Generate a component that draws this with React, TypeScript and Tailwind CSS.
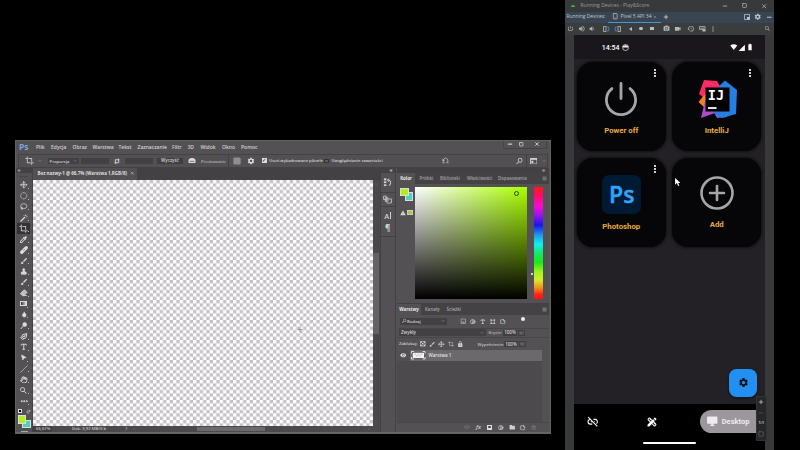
import React from "react";
import {
  MdLinkOff, MdDesktopWindows, MdSettings, MdMoreVert, MdPowerSettingsNew, MdVolumeUp, MdVolumeDown,
  MdPhotoCamera, MdVideocam, MdSignalCellular4Bar, MdBatteryFull, MdCrop, MdColorize,
  MdBrush, MdOutlineImage, MdLock, MdSearch, MdVisibility, MdFolder, MdFormatShapes,
  MdHistory, MdGridOn, MdHealing, MdWarning, MdDesignServices,
} from "react-icons/md";
import {
  Move, CircleDashed, Lasso, Wand, Eraser, Stamp, Droplet, PenTool, Type, MousePointer2, Hand, Ellipsis,
  ChevronDown, ChevronLeft, ChevronRight, ChevronUp, Menu, Link2, Contrast, Trash2, StickyNote, Undo2,
  Minus, Square, X, Plus, PanelTop, Slash, Smartphone, MonitorCog, PictureInPicture2,
} from "lucide-react";

type P = { c?: string; children?: React.ReactNode };

/** Fixed-width slot that centres an icon or label in a bar. */
const Cell = ({ c = "", children }: P) => (
  <div className={"flex h-full shrink-0 items-center justify-center " + c}>{children}</div>
);
/** Fixed-width slot with its label on the left. */
const Label = ({ c = "", children }: P) => (
  <span className={"block shrink-0 whitespace-nowrap " + c}>{children}</span>
);

const CropGlyph = ({ c }: { c: string }) => <MdCrop className={c} />;

function GradientTool() {
  return <div className="h-[5px] w-[7px] border-[0.5px] border-[#ddd] bg-linear-to-r from-[#333] to-[#ddd]" />;
}
function DodgeTool() {
  return (
    <svg viewBox="0 0 24 24" className="size-[7.5px]">
      <circle cx="15" cy="8" r="7" fill="#ddd" />
      <path d="M10 13L2 23" stroke="#ddd" strokeWidth="3" />
    </svg>
  );
}

const i = "size-[7.5px] text-[#dcdcdc]";
const tools: React.ReactNode[] = [
  <Move className={i} strokeWidth={2.6} />,
  <CircleDashed className={i} strokeWidth={2.2} />,
  <Lasso className={i} strokeWidth={2.2} />,
  <svg viewBox="0 0 16 16" className="size-[8px]" fill="none" stroke="#dcdcdc">
    <path d="M1 15L10 6" strokeWidth="2.6" />
    <path d="M11 1V4M15 5H12.500M14.500 1.500L13 3M7 2L8.500 3.500M14 9L12.500 7.500" strokeWidth="1.4" />
  </svg>,
  <CropGlyph c="size-[9px] text-[#e6e6e6]" />,
  <MdColorize className="size-[9px] text-[#dcdcdc]" />,
  <svg viewBox="0 0 16 16" className="size-[8px]">
    <path d="M3.500 12.500L12.500 3.500" stroke="#dcdcdc" strokeWidth="6.500" strokeLinecap="round" />
    <path d="M6 7.500L8.500 10M7.500 6L10 8.500" stroke="#5a585a" strokeWidth="1" />
  </svg>,
  <MdBrush className="size-[8px] text-[#dcdcdc]" />,
  <Stamp className={i} strokeWidth={3} fill="currentColor" />,
  <MdBrush className="size-[8px] text-[#dcdcdc]" />,
  <Eraser className={i} strokeWidth={2.5} fill="#bbb" />,
  <GradientTool />,
  <Droplet className="size-[6.5px] text-[#dcdcdc]" fill="currentColor" />,
  <DodgeTool />,
  <PenTool className={i + " -scale-x-100"} strokeWidth={3} />,
  <Type className={i} strokeWidth={3} />,
  <MousePointer2 className="size-[7px] rotate-[8deg] text-[#dcdcdc]" fill="currentColor" />,
  <Slash className="size-[8px] text-[#cfcfcf]" strokeWidth={2} />,
  <Hand className={i} strokeWidth={3} />,
  <MdSearch className="size-[9px] text-[#dcdcdc]" />,
  <Ellipsis className="size-[8.5px] text-[#dcdcdc]" strokeWidth={3.5} />,
];

function MenuBar() {
  return (
    <div className="flex h-[13.5px] items-center pl-[3.5px] text-[5px] font-semibold text-[#d2d2d2]">
      <Label c="w-[17px] text-[8.5px] font-bold text-[#7da7d6]">Ps</Label>
      <Label c="w-[15px]">Plik</Label>
      <Label c="w-[21.5px]">Edycja</Label>
      <Label c="w-[20px]">Obraz</Label>
      <Label c="w-[26px]">Warstwa</Label>
      <Label c="w-[19px]">Tekst</Label>
      <Label c="w-[34.5px]">Zaznaczanie</Label>
      <Label c="w-[15.5px]">Filtr</Label>
      <Label c="w-[13px]">3D</Label>
      <Label c="w-[21.5px]">Widok</Label>
      <Label c="w-[19px]">Okno</Label>
      <Label>Pomoc</Label>
      <div className="mr-[3px] mb-[5px] ml-auto flex h-[8px] items-center border-x-[0.5px] border-b-[0.5px] border-[#444244] text-[#ccc]">
        <Cell c="w-[11.5px]"><Minus className="size-[6px]" strokeWidth={5} /></Cell>
        <Cell c="w-[11.5px]"><Square className="size-[4.5px]" strokeWidth={4.5} /></Cell>
        <Cell c="w-[19px]"><X className="size-[6px]" strokeWidth={3.5} /></Cell>
      </div>
    </div>
  );
}

function OptionsBar() {
  return (
    <div className="mx-[2px] flex h-[13.5px] items-center border-[0.5px] border-[#444244] bg-[#525052] text-[4.5px] text-[#d2d2d2]">
      <Cell c="w-[22px]"><CropGlyph c="size-[9px] text-[#ddd]" /></Cell>
      <Cell c="-ml-[4px] w-[7px]"><ChevronDown className="size-[4px]" /></Cell>
      <div className="ml-[4px] flex h-[6.5px] w-[31px] items-center justify-between bg-[#424042] px-[2px] text-[4.3px] font-semibold">
        Proporcja <ChevronDown className="size-[4px]" />
      </div>
      <div className="ml-[2px] h-[6px] w-[28px] bg-[#424042]" />
      <Cell c="w-[16px]">
        <svg viewBox="0 0 14 14" className="size-[6px]" fill="none" stroke="#ddd" strokeWidth="2">
          <path d="M3 9V4H12M9 1L12 4 9 7M11 6V11H2M5 8L2 11 5 14" />
        </svg>
      </Cell>
      <div className="h-[6px] w-[28px] bg-[#424042]" />
      <div className="ml-[4.5px] flex h-[6.5px] w-[26px] items-center justify-center bg-[#403e40] font-semibold">Wyczyść</div>
      <Cell c="w-[18px]">
        <svg viewBox="0 0 16 12" className="h-[6px] w-[8px]"><path d="M1 5a7 5 0 0114 0v5H1z" fill="#ddd" /><path d="M3 7h10M6 5v3M10 5v3" stroke="#555" /></svg>
      </Cell>
      <Label c="w-[27px] text-[4.3px]">Prostowanie</Label>
      <Cell c="w-[17px] border-l-[0.5px] border-[#444244]"><MdGridOn className="size-[8px] text-[#ccc]" /></Cell>
      <Cell c="w-[11px]"><MdSettings className="size-[8px] text-[#ddd]" /></Cell>
      <Cell c="ml-[4px] w-[8px]">
        <div className="flex size-[5px] items-center justify-center bg-[#ddd] text-[5px] leading-none font-bold text-[#333]">✓</div>
      </Cell>
      <Label c="ml-px w-[54px] text-[4.1px] font-semibold">Usuń wykadrowane piksele</Label>
      <Cell c="w-[7px]"><div className="size-[4.5px] border-[0.5px] border-[#333] bg-[#5f5d5f]" /></Cell>
      <Label c="w-[111px] pl-[1.5px] text-[4.1px] font-semibold">Uwzględnianie zawartości</Label>
      <Cell c="w-[8px]">
        <svg viewBox="0 0 16 16" className="size-[7px]" fill="none" stroke="#bbb" strokeWidth="1.8">
          <path d="M5 13A5.500 5.500 0 1111 13M1 13H6M10 13H15M2 4V8H6" />
        </svg>
      </Cell>
      <Cell c="ml-auto w-[14px]"><MdSearch className="size-[8.5px] -scale-x-100 text-[#ddd]" /></Cell>
      <Cell c="w-[14px] border-l-[0.5px] border-[#444244]">
        <svg viewBox="0 0 16 14" className="h-[6.5px] w-[7.5px]">
          <path d="M1 1H15V13H1z" fill="none" stroke="#ddd" strokeWidth="1.8" />
          <path d="M1 1H15V4H1zM3 6H7V11H3z" fill="#ddd" />
        </svg>
      </Cell>
      <Cell c="w-[7px]"><ChevronDown className="size-[4px]" /></Cell>
    </div>
  );
}

function Swatches({ c }: { c: string }) {
  return (
    <div className={"grid size-[13px] grid-cols-[4.5px_4px_4.5px] grid-rows-[4.5px_4px_4.5px] " + c}>
      <div className="col-span-2 col-start-2 row-span-2 row-start-2 border-[0.5px] border-[#ddd] bg-[#50d0c4]" />
      <div className="z-1 col-span-2 col-start-1 row-span-2 row-start-1 border-[0.7px] border-[#ddd] bg-[#b2ee1c]" />
    </div>
  );
}

function Toolbox() {
  return (
    <div className="w-[17.5px] shrink-0 border-r border-[#434143] bg-[#535153]">
      <div className="h-[5.5px] bg-[#434143] pl-[2px] text-[5px] leading-[4.5px] font-bold text-[#bbb]">»</div>
      <div className="mx-auto mt-[3px] mb-[3.1px] h-[0.7px] w-[9px] bg-[#474547]" />
      {tools.map((t, n) => (
        <div key={n} className={"mx-auto flex h-[10.8px] w-[13px] items-center justify-center " + (n === 4 ? "bg-[#343234]" : "")}>
          <div className="ml-[1px]">{t}</div>
          <span className="mt-[6px] block size-[0.8px] bg-[#bbb]" />
        </div>
      ))}
      <div className="mt-[1.5px] ml-[2.5px] flex h-[6px] items-center gap-[3.5px]">
        <div className="size-[4px] border-[0.7px] border-[#ddd] bg-black" />
        <Undo2 className="size-[5px] -scale-x-100 text-[#ccc]" strokeWidth={3} />
      </div>
      <Swatches c="mt-[1px] ml-[2px]" />
      <div className="mt-[3px] ml-[5px] h-[1px] w-[7px] bg-[#aaa]" />
    </div>
  );
}

/** Transparency checkerboard of the empty layer. */
function Checkerboard() {
  return (
    <svg className="h-[246px] w-[339.5px] shrink-0">
      <defs>
        <pattern id="checker" width="6.667" height="6.667" patternUnits="userSpaceOnUse">
          <rect width="6.667" height="6.667" fill="#fff" />
          <path d="M3.333 0H6.667V3.333H3.333zM0 3.333H3.333V6.667H0z" fill="#c5c1c6" />
        </pattern>
      </defs>
      <rect width="340" height="246" fill="url(#checker)" />
      <path d="M264.500 149.500H269.500M267 147V152" stroke="#8d8b90" strokeWidth="0.8" />
    </svg>
  );
}

function Document() {
  return (
    <div className="flex w-[346.5px] shrink-0 flex-col bg-[#434143]">
      <div className="flex h-[12.5px] items-end">
        <div className="flex h-[12px] w-[104px] items-center justify-between bg-[#525052] pr-[3px] pl-[4.5px] text-[4.5px] font-bold whitespace-nowrap text-[#dedede]">
          Bez nazwy-1 @ 66,7% (Warstwa 1,RGB/8) <X className="size-[4.5px] text-[#ccc]" strokeWidth={3} />
        </div>
      </div>
      <div className="flex h-[246px]">
        <Checkerboard />
        <div className="flex w-[7px] flex-col items-center bg-[#4a484a] text-[#888]">
          <ChevronUp className="mt-[2px] size-[4px]" />
          <div className="mt-[67px] h-[81.5px] w-[5.5px] bg-[#646264]" />
          <ChevronDown className="mt-auto mb-[2px] size-[4px]" />
        </div>
      </div>
      <div className="flex h-[7px] items-center bg-[#4b494b] text-[4.4px] font-semibold text-[#c6c6c6]">
        <div className="flex h-full w-[18.5px] items-center bg-[#403e40] pl-[3px] text-[4.2px]">66,67%</div>
        <Label c="w-[71px] pl-[20.5px] text-[4.2px]">Dok: 3,92 MB/0 b</Label>
        <Cell c="w-[7px]"><ChevronRight className="size-[5px]" strokeWidth={3} /></Cell>
        <Cell c="w-[8px]"><ChevronLeft className="size-[4px] text-[#888]" /></Cell>
        <div className="ml-[59px] h-[4.5px] w-[68.5px] bg-[#6b696b]" />
        <Cell c="mr-[7px] ml-auto w-[7px]"><ChevronRight className="size-[4px] text-[#888]" /></Cell>
      </div>
    </div>
  );
}

function Dock() {
  return (
    <div className="flex w-[16px] shrink-0 flex-col border-x border-[#434143] bg-[#535153] text-[#d0d0d0]">
      <div className="h-[5px] bg-[#434143] pr-[2px] text-right text-[5px] leading-[4px] font-bold">«</div>
      <Cell c="!h-[20px] border-b-[0.7px] border-[#434143]">
        <svg viewBox="0 0 16 16" className="size-[8.5px]" fill="none" stroke="#d8d8d8" strokeWidth="1.8">
          <path d="M2 1H6V4H2zM2 6.500H6V9.500H2zM2 12H6V15H2z" fill="#d8d8d8" strokeWidth="0.5" />
          <path d="M8.500 4H11A3 4.500 0 0111 14M11 1L8.500 4 11 7" />
        </svg>
      </Cell>
      <Cell c="!h-[14.5px] border-b-[0.7px] border-[#434143]">
        <svg viewBox="0 0 16 16" className="size-[9px]" fill="none" stroke="#c8c8c8" strokeWidth="1.5">
          <path d="M1 2H6V8H1zM4 5H9V11H4zM11 7A4 4 0 1011 14.500M11 7H15V14H11" />
        </svg>
      </Cell>
      <div className="flex h-[29.5px] flex-col items-center justify-center gap-[4px] border-b-[0.7px] border-[#434143] pt-[0.5px] text-[8px] leading-[8px]">
        <span className="flex items-center gap-[0.5px] text-[7.5px] font-semibold">A<i className="block h-[7px] w-[0.8px] bg-[#d0d0d0]" /></span>
        <span className="font-bold">¶</span>
      </div>
    </div>
  );
}

function ColorPanel() {
  return (
    <div className="h-[130px]">
      <div className="flex h-[11.5px] items-center bg-[#444244] text-[4.4px] font-semibold text-[#a4a2a4]">
        <div className="flex h-full w-[18px] items-center justify-center bg-[#535153] font-bold text-[#e8e8e8]">Kolor</div>
        <Label c="w-[21px] pl-[4.5px]">Próbki</Label>
        <Label c="w-[27px] pl-[4px]">Biblioteki</Label>
        <Label c="w-[31px] pl-[4px]">Właściwości</Label>
        <Label c="pl-[4px]">Dopasowania</Label>
        <Menu className="mr-[2.5px] ml-auto size-[5px]" strokeWidth={3} />
      </div>
      <div className="flex pt-[3px]">
        <div className="w-[18px] pl-[3px]">
          <Swatches c="mt-[0.5px]" />
          <div className="mt-[9px] flex items-center gap-[1px]">
            <MdWarning className="size-[6px] text-[#ddd]" />
            <div className="size-[5.5px] border-[0.5px] border-[#ccc] bg-[#a8cc30]" />
          </div>
        </div>
        <div className="size-[112px] bg-[linear-gradient(to_bottom,transparent,#000000),linear-gradient(to_right,#ffffff,#aaff00)] pt-[4px] pl-[99px]">
          <div className="size-[5px] rounded-full border-[0.8px] border-[#33460b]" />
        </div>
        <div className="flex w-[7px] items-start justify-end pt-[86px] pr-[1.5px]">
          <div className="size-[2px] rounded-full bg-white" />
        </div>
        <div className="h-[112px] w-[8.5px] bg-[linear-gradient(#ff1a1a_0%,#ff0a60_7%,#f80bd0_17%,#9c16e8_25%,#1815f0_34%,#209ae8_43%,#10f0ee_51%,#16e870_59%,#18e818_67%,#a0f420_76%,#d8ea28_83%,#f09020_90%,#ff2518_96%,#ff1010)]" />
      </div>
    </div>
  );
}

function LayersPanel() {
  return (
    <div className="flex h-[130.5px] flex-col border-t border-[#434143] text-[4.5px] font-semibold text-[#d0d0d0]">
      <div className="flex h-[11.5px] items-center bg-[#444244] text-[#a8a6a8]">
        <div className="flex h-full w-[24px] items-center justify-center bg-[#535153] font-bold text-[#e8e8e8]">Warstwy</div>
        <Label c="w-[21.5px] pl-[4px]">Kanały</Label>
        <Label c="pl-[4px]">Ścieżki</Label>
        <Menu className="mr-[2.5px] ml-auto size-[5px]" strokeWidth={3} />
      </div>
      <div className="flex h-[12.5px] items-center pl-[2.5px]">
        <div className="flex h-[7px] w-[47px] items-center bg-[#424042] px-[1.5px] text-[4.3px]">
          <MdSearch className="size-[6px] -scale-x-100" /> Rodzaj <ChevronDown className="ml-auto size-[4px]" />
        </div>
        <Cell c="ml-[11px] w-[10.5px]"><MdOutlineImage className="size-[6.5px]" /></Cell>
        <Cell c="w-[10px]"><Contrast className="size-[5.5px]" strokeWidth={3} /></Cell>
        <Cell c="w-[10px]"><Type className="size-[5.5px]" strokeWidth={3.5} /></Cell>
        <Cell c="w-[10px]">
          <svg viewBox="0 0 14 14" className="size-[5.5px]" fill="none" stroke="#d0d0d0" strokeWidth="1.6">
            <path d="M3 3H11V11H3z" /><path d="M1 1H4V4H1zM10 1H13V4H10zM1 10H4V13H1zM10 10H13V13H10z" fill="#d0d0d0" strokeWidth="0.5" />
          </svg>
        </Cell>
        <Cell c="w-[10px]"><StickyNote className="size-[5.5px]" strokeWidth={3} /></Cell>
        <div className="mb-[4px] ml-[13px] size-[4px] rounded-full bg-[#eee]" />
      </div>
      <div className="flex h-[10.5px] items-center border-y-[0.5px] border-[#484648] pl-[2px]">
        <div className="flex h-[7px] w-[87px] items-center justify-between bg-[#424042] px-[2px]">
          Zwykły <ChevronDown className="size-[4px]" />
        </div>
        <Label c="w-[17px] pl-[2.5px] text-[4.2px] text-[#b8b8b8]">Krycie:</Label>
        <div className="flex h-[6.5px] w-[14px] items-center justify-center bg-[#403e40]">100%</div>
        <div className="ml-[1px] flex h-[6.5px] w-[6.5px] items-center justify-center border-[0.5px] border-[#403e40]"><ChevronDown className="size-[4px]" /></div>
      </div>
      <div className="flex h-[12px] items-center pl-[2px]">
        <Label c="w-[19px] text-[4.2px]">Zablokuj:</Label>
        <Cell c="w-[9.5px]">
          <svg viewBox="0 0 12 12" className="size-[5.5px]" fill="#ddd"><path d="M1 1H4V4H1zM8 1H11V4H8zM4.500 4.500H7.500V7.500H4.500zM1 8H4V11H1zM8 8H11V11H8z" /><path d="M0.800 0.800H11.200V11.200H0.800z" fill="none" stroke="#ddd" strokeWidth="1.3" /></svg>
        </Cell>
        <Cell c="w-[9.5px]"><MdBrush className="size-[6.5px]" /></Cell>
        <Cell c="w-[9px]"><Move className="size-[6.5px]" strokeWidth={2.6} /></Cell>
        <Cell c="w-[9.5px]"><MdCrop className="size-[6px]" /></Cell>
        <Cell c="w-[9px]"><MdLock className="size-[6.5px]" /></Cell>
        <Label c="w-[39.5px] pl-[13px] text-[4.3px] text-[#c0c0c0]">Wypełnienie:</Label>
        <div className="flex h-[6.5px] w-[14px] items-center justify-center bg-[#403e40]">100%</div>
        <div className="ml-[1px] flex h-[6.5px] w-[6.5px] items-center justify-center border-[0.5px] border-[#403e40]"><ChevronDown className="size-[4px]" /></div>
      </div>
      <div className="flex h-[11px] w-[145px] items-center bg-[#6b696b]">
        <Cell c="w-[13px] bg-[#525052]"><MdVisibility className="size-[6.5px] text-[#eee]" /></Cell>
        <svg viewBox="0 0 29 17" className="ml-px h-[8.5px] w-[14.5px]">
          <rect x="2.500" y="2.500" width="24" height="12" fill="#f4f4f4" stroke="#333" />
          <path d="M7 5h3v3h3v-3h3v3h3v-3h3v3h-3v3h-3v-3h-3v3h-3v-3h-3z" fill="#c9c9c9" />
          <path d="M1 5V1H6M23 1H28V5M28 12V16H23M6 16H1V12" fill="none" stroke="#fff" strokeWidth="1.500" />
        </svg>
        <Label c="pl-[3px] text-[#e2e2e2]">Warstwa 1</Label>
      </div>
      <div className="w-[145px] flex-1 bg-[#4c4a4c]" />
      <div className="flex h-[11.5px] items-center border-t-[0.5px] border-[#484648] pb-[1px] pl-[64px]">
        <Cell c="w-[12px]"><Link2 className="size-[6px] text-[#858385]" /></Cell>
        <Cell c="w-[11px] text-[6px] italic">fx</Cell>
        <Cell c="w-[11px]"><div className="flex h-[4.5px] w-[5px] items-center justify-center bg-[#ddd]"><div className="size-[2.4px] rounded-full bg-[#444]" /></div></Cell>
        <Cell c="w-[11.5px]"><Contrast className="size-[5.5px]" strokeWidth={3} /></Cell>
        <Cell c="w-[11px]"><MdFolder className="size-[6.5px]" /></Cell>
        <Cell c="w-[11px]"><StickyNote className="size-[5.5px] -scale-x-100 rotate-90" strokeWidth={3} /></Cell>
        <Cell c="w-[11px]"><Trash2 className="size-[5.5px] text-[#858385]" /></Cell>
      </div>
    </div>
  );
}

function Photoshop() {
  return (
    <div className="mt-[139.5px] ml-[14.5px] h-[294.5px] w-[536.5px] shrink-0 border-[0.7px] border-[#636163] bg-[#535153] font-['Open_Sans','Noto_Sans',sans-serif]">
      <MenuBar />
      <OptionsBar />
      <div className="flex h-[265.5px] border-b border-[#686668]">
        <Toolbox />
        <Document />
        <Dock />
        <div className="ml-[1.5px] w-[152px] bg-[#535153]">
          <div className="h-[5px] bg-[#434143] pr-[4px] text-right text-[5px] leading-[4px] font-bold text-[#bbb]">»</div>
          <ColorPanel />
          <LayersPanel />
        </div>
      </div>
    </div>
  );
}

function EmulatorChrome() {
  return (
    <div className="font-['Open_Sans','Noto_Sans',sans-serif] text-[5px] text-[#b4b6b8]">
      <div className="flex h-[11.5px] items-center bg-[#37393b] pl-[5px] text-[#9a9c9e]">
        <Cell c="w-[6px]"><div className="h-[2.5px] w-[4px] rounded-t-full bg-[#4dad4a]" /></Cell>
        <Label c="pl-[5px] text-[5px]">Running Devices - Play&amp;Score</Label>
        <div className="ml-auto flex h-full items-center text-[#c2c2c2]">
          <Cell c="w-[20px]"><Minus className="size-[6px]" strokeWidth={3} /></Cell>
          <Cell c="w-[19px]"><Square className="size-[5px]" strokeWidth={3} /></Cell>
          <Cell c="w-[20px]"><X className="size-[6.5px]" strokeWidth={2.5} /></Cell>
        </div>
      </div>
      <div className="flex h-[11px] items-center bg-[#384653] pl-[2px] text-[#c4c8cc]">
        <Label c="w-[41px] text-[4.9px]">Running Devices:</Label>
        <div className="flex h-full w-[53px] items-center border-b border-[#4795d8] pl-[4px]">
          <Smartphone className="size-[6.5px]" strokeWidth={2.5} />
          <Label c="w-[34.5px] pl-[2.5px]">Pixel 5 API 34</Label>
          <X className="size-[4px] shrink-0" />
        </div>
        <Cell c="w-[11.5px]"><Plus className="size-[6px] text-[#ddd]" strokeWidth={3} /></Cell>
        <Cell c="ml-auto w-[11px]">
          <svg viewBox="0 0 14 14" className="size-[6px]"><path d="M1 1H13V13H1z" fill="none" stroke="#c4c8cc" strokeWidth="1.8" /><path d="M7 7H13V13H7z" fill="#c4c8cc" /></svg>
        </Cell>
        <Cell c="w-[11px]"><MdSettings className="size-[7.5px]" /></Cell>
        <Cell c="w-[10.5px]"><Minus className="size-[6.5px]" strokeWidth={3.5} /></Cell>
      </div>
      <div className="flex h-[12px] items-center bg-[#3a3c3e] pl-[1px]">
        <Cell c="w-[10.5px]"><MdPowerSettingsNew className="size-[7px]" /></Cell>
        <Cell c="w-[11px]"><MdVolumeUp className="size-[7.5px]" /></Cell>
        <Cell c="w-[10px]"><MdVolumeDown className="size-[7.5px]" /></Cell>
        <Cell c="ml-[3px] w-[12px]">
          <svg viewBox="0 0 14 12" className="h-[6px] w-[7px]" fill="none" strokeWidth="1.600"><path d="M1 1H6V11H1z" stroke="#bbb" /><path d="M8 2H11Q13 6 11 10H8" stroke="#4795d8" /></svg>
        </Cell>
        <Cell c="w-[11px]">
          <svg viewBox="0 0 14 12" className="h-[6px] w-[7px]" fill="none" strokeWidth="1.600"><path d="M8 1H13V11H8z" stroke="#bbb" /><path d="M6 2H3Q1 6 3 10H6" stroke="#4795d8" /></svg>
        </Cell>
        <Cell c="w-[15px]"><div className="border-y-[2px] border-r-[3px] border-y-transparent border-r-[#bbb]" /></Cell>
        <Cell c="w-[6px]"><div className="size-[3.5px] rounded-full bg-[#bbb]" /></Cell>
        <Cell c="w-[16px]"><div className="size-[3.5px] bg-[#bbb]" /></Cell>
        <Cell c="w-[12px]"><MdPhotoCamera className="size-[7px]" /></Cell>
        <Cell c="w-[11px]"><MdVideocam className="size-[7.5px]" /></Cell>
        <Cell c="ml-[1px] w-[13px]"><MdHistory className="size-[7.5px]" /></Cell>
        <Cell c="w-[11px]">
          <svg viewBox="0 0 16 14" className="h-[6px] w-[7px]"><path d="M1 1H14V8H1z" fill="none" stroke="#bbb" strokeWidth="1.8" /><path d="M3 4H12V6H3zM8 8H15V13H8z" fill="#bbb" /></svg>
        </Cell>
        <Cell c="w-[9px]"><MdMoreVert className="size-[8px]" /></Cell>
        <Cell c="mr-[2px] ml-auto w-[10px]"><MdSearch className="size-[7px]" /></Cell>
      </div>
    </div>
  );
}

function StatusBar() {
  return (
    <div className="flex h-[24.5px] items-center bg-[#19171b] pt-[1px] pl-[28px] text-[7.2px] text-white">
      <Label c="w-[20px] pt-[1px] text-[7px] font-medium">14:54</Label>
      <svg viewBox="0 0 14 14" className="size-[7px]">
        <circle cx="7" cy="7" r="6" fill="none" stroke="#eee" strokeWidth="1.4" />
        <path d="M1.4 4.5Q7 0 12.6 4.5L12 7H2z" fill="#eee" />
      </svg>
      <div className="mr-[11px] ml-auto flex items-center">
        <svg viewBox="0 0 14 12" className="h-[6px] w-[7.5px]"><path d="M7 12L0 3Q7-2 14 3z" fill="#fff" /></svg>
        <MdSignalCellular4Bar className="ml-[0.5px] size-[7.5px]" />
        <MdBatteryFull className="size-[8px]" />
      </div>
    </div>
  );
}

function Tile({ label, menu, children, c = "" }: { label: string; menu?: boolean; children: React.ReactNode; c?: string }) {
  return (
    <div className="relative flex h-[89px] w-[89px] flex-col items-center rounded-[16px] bg-[#060507] shadow-[0_0_3px_1px_rgba(6,5,7,0.65)]">
      {menu && <MdMoreVert className="absolute top-[5px] right-[5px] size-[12px] text-white" />}
      <div className="mt-[17.5px] flex h-[39px] items-center justify-center">{children}</div>
      <div className={"text-[7.8px] leading-[10px] font-bold text-[#e9ac3e] " + c}>{label}</div>
    </div>
  );
}

function IntelliJ() {
  return (
    <div className="grid h-[40px] w-[40px]">
      <svg viewBox="0 0 40 40" className="col-start-1 row-start-1 size-[40px]">
        <path d="M7 1L20 2 24 9 15 18 6 18 2 15z" fill="#fc2c62" />
        <path d="M1.5 23L8 15 12 22 8 29z" fill="#f28020" />
        <path d="M8 22L14 30 18 34 4 39z" fill="#b04ccc" />
        <path d="M15 30L28 28 30 38 20 39z" fill="#586be0" />
        <path d="M28 1.5L40 11 39 35 25 39 17 33 20 9z" fill="#237fe2" />
        <path d="M8.500 8.500H32.500V32.500H8.500z" fill="#000" />
        <path d="M11 29H19.500" stroke="#fff" strokeWidth="1.8" />
      </svg>
      <span className="z-1 col-start-1 row-start-1 pt-[9px] pl-[11px] font-['DejaVu_Sans_Mono','Liberation_Mono',monospace] text-[13.5px] leading-[15px] font-bold text-white">IJ</span>
    </div>
  );
}

function Phone() {
  return (
    <div className="mx-auto flex h-[415.5px] w-[191px] flex-col overflow-hidden bg-[#232125] font-['Roboto',sans-serif]">
      <StatusBar />
      <div className="grid grid-cols-[89px_89px] gap-x-[6.5px] gap-y-[7px] pt-[2.5px] pl-[3px]">
        <Tile label="Power off" menu c="mt-[8px]">
          <svg viewBox="0 0 36 36" className="size-[36px]" fill="none" stroke="#a7a5a8" strokeWidth="2.8" strokeLinecap="round">
            <path d="M18 2.500V17.500M8.900 7.600A14.600 14.600 0 1027.100 7.600" />
          </svg>
        </Tile>
        <Tile label="IntelliJ" menu c="mt-[8px]"><IntelliJ /></Tile>
        <Tile label="Photoshop" menu c="mt-[8px]">
          <div className="flex size-[39px] items-center justify-center rounded-[7px] bg-[#001a33] pb-[1px] pl-[1px] font-['Open_Sans',sans-serif] text-[23px] font-semibold text-[#31a3fa] [-webkit-text-stroke:0.5px_#31a3fa]">Ps</div>
        </Tile>
        <Tile label="Add" c="mt-[6px]">
          <svg viewBox="0 0 36 36" className="mb-[3px] size-[36px]" fill="none" stroke="#a7a5a8" strokeWidth="2.6" strokeLinecap="round">
            <circle cx="18" cy="18" r="15.500" />
            <path d="M18 11V25M11 18H25" />
          </svg>
        </Tile>
      </div>
      <div className="mt-auto mr-[8px] mb-[7.500px] ml-auto flex size-[27.500px] items-center justify-center rounded-[7.500px] bg-[#2190f2] shadow-[0_1px_3px_#0008]">
        <MdSettings className="size-[11px] text-[#0b0d10]" />
      </div>
      <div className="flex h-[46px] flex-col bg-black">
        <div className="flex h-[35px] items-center text-white">
          <Cell c="w-[38px]">
            <svg viewBox="0 0 24 24" className="size-[11.500px]" fill="none" stroke="#fff" strokeWidth="2.200">
              <path d="M2.500 2.500L21.500 21.500" />
              <path d="M7 7.200A4.800 4.800 0 007 17H11M13.500 7H17A4.900 4.900 0 0119.500 16M8 12H11.500M14.500 12H16" />
            </svg>
          </Cell>
          <Cell c="ml-[34px] w-[12px]"><MdDesignServices className="size-[12px]" /></Cell>
          <div className="mt-[-0.500px] ml-auto flex h-[23px] w-[64.500px] shrink-0 items-center rounded-l-full bg-[#9b979c] pl-[6px] text-[7.500px] font-bold text-[#ececec]">
            <MdDesktopWindows className="mr-[3px] size-[12.500px]" />
            Desktop
          </div>
        </div>
        <div className="mx-auto mt-[3px] h-[2px] w-[52.500px] rounded-full bg-white" />
      </div>
    </div>
  );
}

export default function App() {
  return (
    <div className="relative flex h-[450px] w-[800px] overflow-hidden bg-black">
      <Photoshop />
      <div className="ml-[13.500px] h-[450px] w-[209.500px] shrink-0 bg-[#37393b]">
        <EmulatorChrome />
        <Phone />
      </div>
      {/* zoom controls floating over the device screen */}
      <div className="absolute top-[395.500px] left-[755.500px] flex h-[45px] w-[11.500px] flex-col items-center justify-around rounded-[1px] border-[0.500px] border-[#323436] bg-[#252729] font-['Open_Sans',sans-serif] text-[4px] font-bold text-[#c5c5c5]">
        <Plus className="size-[6px]" strokeWidth={3} />
        <Minus className="size-[6px] text-[#66686a]" />
        <span>1:1</span>
        <Square className="size-[6px] text-[#66686a]" strokeWidth={2.500} />
      </div>
      {/* mouse pointer */}
      <svg viewBox="0 0 12 18" className="absolute top-[178px] left-[674.500px] h-[8px] w-[5.500px]">
        <path d="M0 0V15L4 11.500 7 18 9.500 17 7 11H12z" fill="#fff" />
      </svg>
    </div>
  );
}
